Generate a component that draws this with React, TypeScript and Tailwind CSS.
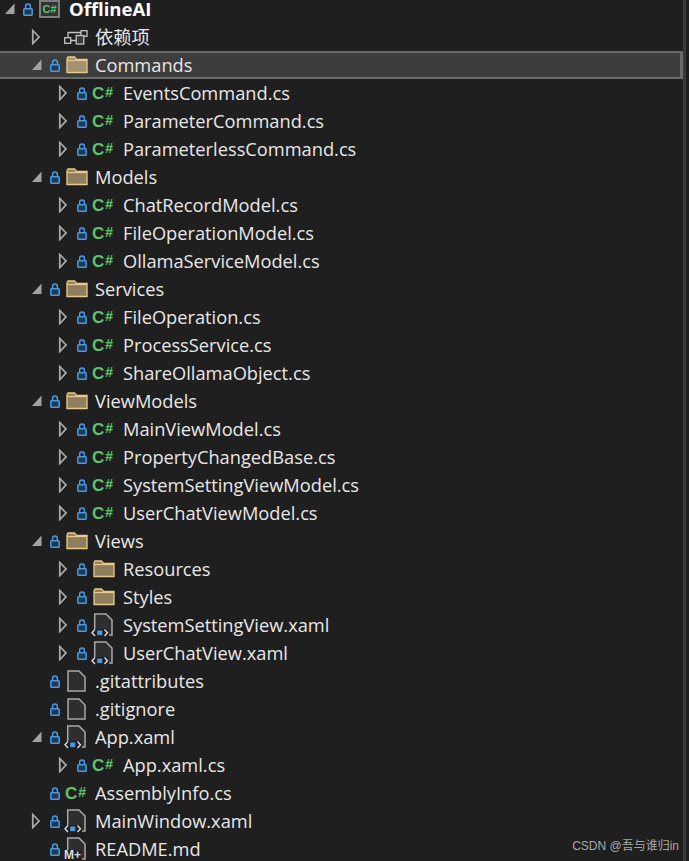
import React from "react";

type Arrow = "open" | "closed" | "none";
type Icon = "cs" | "folder" | "xaml" | "file" | "md" | "deps" | "root";
type Item = { level: 0 | 1 | 2; arrow: Arrow; icon: Icon; label: string; selected?: boolean; bold?: boolean; noLock?: boolean };

const items: Item[] = [
  { level: 0, arrow: "open", icon: "root", label: "OfflineAI", bold: true },
  { level: 1, arrow: "closed", icon: "deps", label: "依赖项", noLock: true },
  { level: 1, arrow: "open", icon: "folder", label: "Commands", selected: true },
  { level: 2, arrow: "closed", icon: "cs", label: "EventsCommand.cs" },
  { level: 2, arrow: "closed", icon: "cs", label: "ParameterCommand.cs" },
  { level: 2, arrow: "closed", icon: "cs", label: "ParameterlessCommand.cs" },
  { level: 1, arrow: "open", icon: "folder", label: "Models" },
  { level: 2, arrow: "closed", icon: "cs", label: "ChatRecordModel.cs" },
  { level: 2, arrow: "closed", icon: "cs", label: "FileOperationModel.cs" },
  { level: 2, arrow: "closed", icon: "cs", label: "OllamaServiceModel.cs" },
  { level: 1, arrow: "open", icon: "folder", label: "Services" },
  { level: 2, arrow: "closed", icon: "cs", label: "FileOperation.cs" },
  { level: 2, arrow: "closed", icon: "cs", label: "ProcessService.cs" },
  { level: 2, arrow: "closed", icon: "cs", label: "ShareOllamaObject.cs" },
  { level: 1, arrow: "open", icon: "folder", label: "ViewModels" },
  { level: 2, arrow: "closed", icon: "cs", label: "MainViewModel.cs" },
  { level: 2, arrow: "closed", icon: "cs", label: "PropertyChangedBase.cs" },
  { level: 2, arrow: "closed", icon: "cs", label: "SystemSettingViewModel.cs" },
  { level: 2, arrow: "closed", icon: "cs", label: "UserChatViewModel.cs" },
  { level: 1, arrow: "open", icon: "folder", label: "Views" },
  { level: 2, arrow: "closed", icon: "folder", label: "Resources" },
  { level: 2, arrow: "closed", icon: "folder", label: "Styles" },
  { level: 2, arrow: "closed", icon: "xaml", label: "SystemSettingView.xaml" },
  { level: 2, arrow: "closed", icon: "xaml", label: "UserChatView.xaml" },
  { level: 1, arrow: "none", icon: "file", label: ".gitattributes" },
  { level: 1, arrow: "none", icon: "file", label: ".gitignore" },
  { level: 1, arrow: "open", icon: "xaml", label: "App.xaml" },
  { level: 2, arrow: "closed", icon: "cs", label: "App.xaml.cs" },
  { level: 1, arrow: "none", icon: "cs", label: "AssemblyInfo.cs" },
  { level: 1, arrow: "closed", icon: "xaml", label: "MainWindow.xaml" },
  { level: 1, arrow: "none", icon: "md", label: "README.md" },
];

function ArrowIcon({ kind }: { kind: Arrow }) {
  return (
    <svg width="11" height="16" viewBox="0 0 11 16" className="shrink-0">
      {kind === "closed" && <path d="M1.8 1.5 L8 8 L1.8 14.5 Z" fill="none" stroke="#a8a8a8" strokeWidth="1.8" />}
      {kind === "open" && <path d="M10.5 2.5 V13 H1 Z" fill="#a3a3a3" />}
    </svg>
  );
}

function Lock() {
  return (
    <svg width="10" height="13" viewBox="0 0 10 13" className="shrink-0">
      <path d="M2.6 5.5 V3.4 a2.4 2.4 0 0 1 4.8 0 V5.5" fill="none" stroke="#4a9ae0" strokeWidth="1.5" />
      <rect x="0.8" y="5.7" width="8.4" height="6.5" rx="0.8" fill="#1d3a54" stroke="#4a9ae0" strokeWidth="1.5" />
    </svg>
  );
}

function Folder({ selected }: { selected?: boolean }) {
  return (
    <svg width="22" height="18" viewBox="0 0 22 18" className="shrink-0">
      <path
        d="M1 3 V16.5 H21 V3.5 H10.5 L8.5 1 H2 Z"
        fill={selected ? "#a3926e" : "#8e7f5c"}
        stroke="#e9c98c"
        strokeWidth="1.3"
      />
      <path d="M1 4.5 H21" stroke="#e9c98c" strokeWidth="1.2" />
    </svg>
  );
}

function FileIcon() {
  return (
    <svg width="19" height="22" viewBox="0 0 19 22" className="shrink-0 ml-[1px]">
      <path d="M1 1 H12 L18 7 V21 H1 Z" fill="#2e2e2e" stroke="#a8a8a8" strokeWidth="1.5" />
    </svg>
  );
}

function Xaml() {
  return (
    <svg width="22" height="24" viewBox="0 0 22 24" className="shrink-0 -ml-[2px]">
      <path d="M3.7 17 V1 H15 L21 7 V22 H18" fill="#2e2e2e" stroke="#a8a8a8" strokeWidth="1.5" />
      <path d="M3.5 16 H17.5 V24 H3.5 Z" fill="#1f1f1f" />
      <path d="M4 16.5 L1 19.7 L4 23 M13.5 16.5 L16.5 19.7 L13.5 23" fill="none" stroke="#d8d8d8" strokeWidth="1.4" />
      <rect x="6.2" y="17.5" width="5" height="4.6" fill="#3f9de8" />
    </svg>
  );
}

function Md() {
  return (
    <div className="relative w-[22px] h-[24px] shrink-0 -ml-[2px]">
      <svg width="22" height="24" viewBox="0 0 22 24" className="absolute left-0 top-0">
        <path d="M3.7 14 V1 H15 L21 7 V22 H18" fill="#2e2e2e" stroke="#a8a8a8" strokeWidth="1.5" />
      </svg>
      <span className="absolute left-0 top-[13px] bg-[#1f1f1f] text-[#dcdcdc] text-[12px] leading-[10px] font-bold font-['Liberation_Sans',sans-serif]">
        M+
      </span>
    </div>
  );
}

function CSharp() {
  return (
    <span className="flex items-start w-[22px] h-[18px] shrink-0 -ml-[1px] font-['Liberation_Sans',sans-serif] font-bold text-[#5cc46a] leading-none">
      <span className="text-[17px] leading-[19px]">C</span>
      <span className="text-[14px] leading-[16px] ml-[1px]">#</span>
    </span>
  );
}

function Root() {
  return (
    <span className="flex items-center justify-center w-[21px] h-[18px] border-2 border-[#7d7d7d] bg-[#333333] shrink-0 font-['Liberation_Sans',sans-serif] font-bold text-[#5cc46a] text-[11px] leading-none">
      C#
    </span>
  );
}

function Deps() {
  return (
    <svg width="24" height="15" viewBox="0 0 24 15" className="shrink-0 -ml-[2px]">
      <g fill="none" stroke="#c4c4c4" strokeWidth="1.3">
        <rect x="0.7" y="7.7" width="6" height="5.6" />
        <path d="M4 7.7 V2.5 H17 M6.7 10.5 H12" />
        <rect x="17" y="0.7" width="6" height="5.6" />
        <rect x="12.2" y="5.5" width="7.6" height="8.5" fill="#3a3a3a" />
      </g>
    </svg>
  );
}

function TypeIcon({ icon, selected }: { icon: Icon; selected?: boolean }) {
  switch (icon) {
    case "cs":
      return <CSharp />;
    case "folder":
      return <Folder selected={selected} />;
    case "xaml":
      return <Xaml />;
    case "file":
      return <FileIcon />;
    case "md":
      return <Md />;
    case "deps":
      return <Deps />;
    case "root":
      return <Root />;
  }
}

const indent = { 0: "pl-[4px]", 1: "pl-[31px]", 2: "pl-[58px]" } as const;
const iconSlot = { 0: "w-[30px]", 1: "w-[29px]", 2: "w-[30px]" } as const;
const fontStack = "font-['Open_Sans','Noto_Sans_CJK_SC',sans-serif]";

function Row({ item }: { item: Item }) {
  const { level, arrow, icon, label, selected, bold, noLock } = item;
  return (
    <div
      className={
        "flex items-center shrink-0 " +
        (level === 0 ? "h-[23px] pb-[5px] " : "h-7 ") +
        indent[level] +
        (selected ? " bg-[#3d3d3d] border-y-2 border-r-[3px] border-[#6a6a6a]" : "")
      }
    >
      <span className="w-[19px] shrink-0 flex items-center">
        <ArrowIcon kind={arrow} />
      </span>
      <span className="w-[10px] shrink-0 flex items-center mr-[6px]">{noLock ? null : <Lock />}</span>
      <span className={"flex items-center shrink-0 " + iconSlot[level]}>
        <TypeIcon icon={icon} selected={selected} />
      </span>
      <span
        className={
          "whitespace-nowrap " +
          fontStack +
          (bold ? " text-[18.5px] leading-[18px] font-bold text-white" : " text-[18.25px] text-[#e8e8e8]")
        }
      >
        {label}
      </span>
    </div>
  );
}

export default function App() {
  return (
    <div className="relative w-[689px] h-[861px] bg-[#1f1f1f] overflow-hidden">
      <div className="flex flex-col w-[683px]">
        {items.map((item) => (
          <Row key={item.label} item={item} />
        ))}
      </div>
      <div className="absolute left-[683px] top-0 w-[3px] h-full bg-[#3a3a3a]" />
      <span className="absolute right-[10px] top-[838px] text-[12px] leading-[16px] text-[#a8a8a8] font-['Liberation_Sans','Noto_Sans_CJK_SC',sans-serif]">
        CSDN @吾与谁归in
      </span>
    </div>
  );
}
